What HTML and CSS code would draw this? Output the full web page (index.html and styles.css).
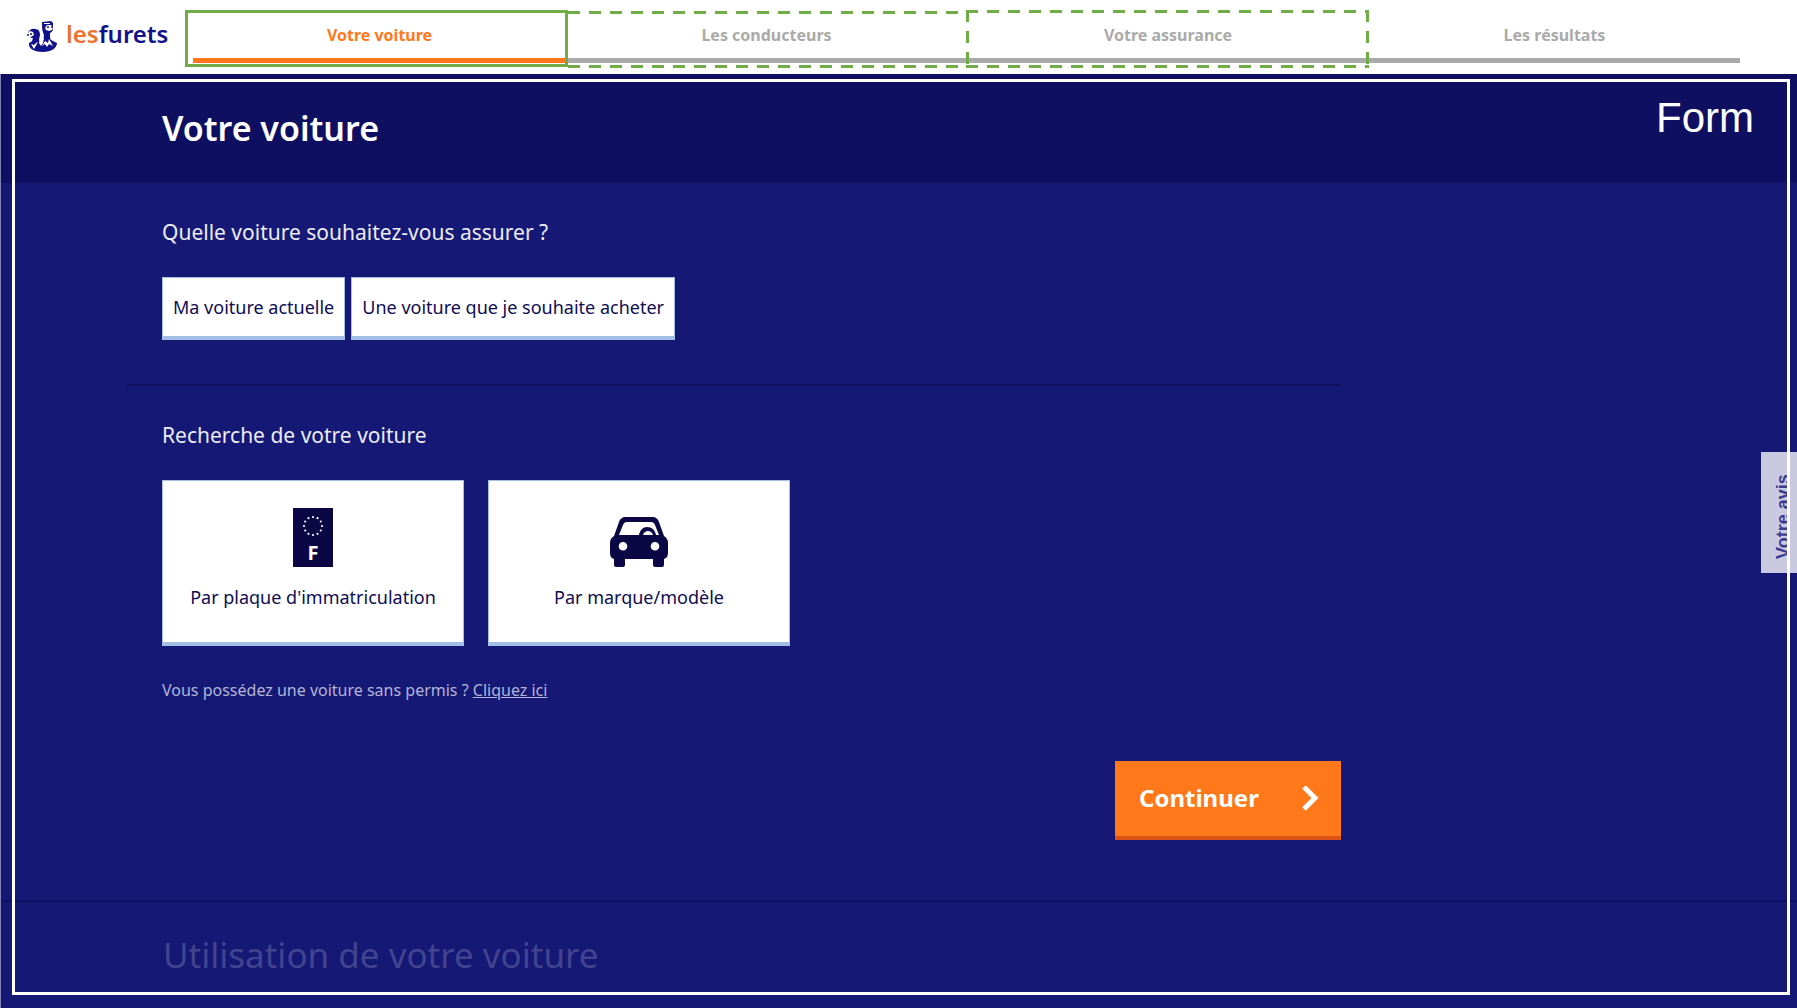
FILE: index.html
```html
<!DOCTYPE html>
<html lang="fr">
<head>
  <meta charset="utf-8">
  <meta name="viewport" content="width=device-width, initial-scale=1">
  <title>lesfurets – Votre voiture</title>
  <link rel="stylesheet" href="styles.css">
</head>
<body>
  <header class="header">
    <a class="logo" href="#">
      <svg class="logo-mark" viewBox="0 0 31 32" aria-hidden="true">
        <g fill="#11128a">
          <path d="M2 22l4-2 10-1 8 0 6 3c0 5-6 9-14 9S1 28 2 22z"/>
          <path d="M1 12c1-3 4-5 7-4 4 0 5 3 5 6l-1 5 2 5-8 0c-2-1-2-3-1-4l1-3c-3 0-5-2-5-5z"/>
          <path d="M15 1l9-1 2 2v5c0 3-1 4-3 5l0 4 2 8-8 0-1-4 1-6c-2-4-2-8-2-13z"/>
        </g>
        <g fill="#fff">
          <path d="M0 13l3-3 3 1 1 3-3 2-2 1z"/>
          <path d="M18 7l2-3 4 0 2 2-1 3-3 1-3-1z"/>
          <path d="M4 23l3 5 4-7-2 1-2 2zM13 16l4 1-1 5-2 3-2-3z"/>
          <path d="M18 20l-3 5 3-2 2 3 2-3 4 2-4-7-1 4z"/>
          <path d="M17 2h6v1h-6z"/>
        </g>
        <g fill="#11128a">
          <circle cx="4" cy="13" r="1"/>
          <circle cx="1" cy="14" r="1"/>
          <circle cx="21" cy="6" r="1"/>
          <circle cx="25" cy="6" r="1"/>
        </g>
      </svg>
      <span class="logo-text"><span class="logo-accent">les</span>furets</span>
    </a>
    <nav class="steps" aria-label="Étapes">
      <a class="step step-current" href="#voiture" aria-current="step">Votre voiture</a>
      <a class="step step-marked" href="#conducteurs">Les conducteurs</a>
      <a class="step step-marked step-closed" href="#assurance">Votre assurance</a>
      <a class="step" href="#resultats">Les résultats</a>
    </nav>
  </header>

  <main class="page">
    <form class="form" action="#">
      <div class="title-band">
        <h1 class="title">Votre voiture</h1>
        <span class="form-tag">Form</span>
      </div>

      <div class="content">
        <section class="block" aria-labelledby="q-car">
          <h2 class="question" id="q-car">Quelle voiture souhaitez-vous assurer ?</h2>
          <div class="options">
            <button class="choice option" type="button">Ma voiture actuelle</button>
            <button class="choice option" type="button">Une voiture que je souhaite acheter</button>
          </div>
        </section>

        <section class="block block-search" aria-labelledby="q-search">
          <h2 class="question" id="q-search">Recherche de votre voiture</h2>
          <div class="cards">
            <button class="choice card" type="button">
              <svg class="card-icon" viewBox="0 0 60 60" aria-hidden="true">
                <rect x="10" y="0" width="40" height="59" fill="#0a0744"/>
                <g fill="#fff">
                  <circle cx="30" cy="9" r="1.1"/><circle cx="34.500" cy="10.200" r="1.1"/>
                  <circle cx="37.800" cy="13.500" r="1.1"/><circle cx="39" cy="18" r="1.1"/>
                  <circle cx="37.800" cy="22.500" r="1.1"/><circle cx="34.500" cy="25.800" r="1.1"/>
                  <circle cx="30" cy="27" r="1.1"/><circle cx="25.500" cy="25.800" r="1.1"/>
                  <circle cx="22.200" cy="22.500" r="1.1"/><circle cx="21" cy="18" r="1.1"/>
                  <circle cx="22.200" cy="13.500" r="1.1"/><circle cx="25.500" cy="10.200" r="1.1"/>
                </g>
                <text class="plate-letter" x="30" y="52" text-anchor="middle">F</text>
              </svg>
              <span>Par plaque d'immatriculation</span>
            </button>
            <button class="choice card" type="button">
              <svg class="card-icon" viewBox="0 0 60 60" aria-hidden="true">
                <path fill="#0a0744" fill-rule="evenodd" d="M17 9h26c4 0 6 2 7 5l5 14c3 2 4 4 4 7v9c0 4-1 6-4 7v6q0 2-2 2h-7q-2 0-2-2v-6H16v6q0 2-2 2H7q-2 0-2-2v-6c-3-1-4-3-4-7v-9c0-3 1-5 4-7l5-14c1-3 3-5 7-5zM18 14q-3 0-4 3L10 27h20c1-5 4-8 8-8 5 0 8 3 9 8h3l-4-10q-1-3-4-3zM34 27h10c-1-3-3-4-5-4s-4 1-5 4zM14 34a4.300 4.300 0 1 0 0 8.600a4.300 4.300 0 1 0 0-8.600zM46 34a4.300 4.300 0 1 0 0 8.600a4.300 4.300 0 1 0 0-8.600z"/>
              </svg>
              <span>Par marque/modèle</span>
            </button>
          </div>
          <p class="note">Vous possédez une voiture sans permis ? <a class="note-link" href="#sans-permis">Cliquez ici</a></p>
        </section>

        <div class="actions">
          <button class="continue" type="submit">
            <span>Continuer</span>
            <svg class="chevron" viewBox="0 0 18 28" aria-hidden="true">
              <path d="M3 3l11 11L3 25" fill="none" stroke="#fff" stroke-width="5"/>
            </svg>
          </button>
        </div>
      </div>

      <section class="next">
        <h2 class="next-title">Utilisation de votre voiture</h2>
      </section>
    </form>
    <button class="feedback" type="button">Votre avis</button>
  </main>
</body>
</html>
```
FILE: styles.css
```css
:root {
  --navy: #151875;
  --navy-dark: #0f0f62;
  --ink: #0f0d52;
  --orange: #ff7819;
  --grey: #aaaaaa;
  --mark: #70ad47;
  --sans: "Noto Sans", "Open Sans", sans-serif;
}

* {
  box-sizing: border-box;
}

body {
  margin: 0;
  min-height: 100vh;
  display: flex;
  flex-direction: column;
  font-family: var(--sans);
  background: var(--navy);
}

h1,
h2,
p {
  margin: 0;
}

button {
  font-family: inherit;
  cursor: pointer;
}

/* Header */
.header {
  display: flex;
  height: 74px;
  padding-right: 57px;
  background: #fff;
}

.logo {
  display: flex;
  gap: 8px;
  flex: none;
  width: 193px;
  padding: 21px 0 0 27px;
  text-decoration: none;
}

.logo-mark {
  width: 31px;
  height: 32px;
}

.logo-text {
  font-size: 24px;
  font-weight: 600;
  line-height: 26px;
  color: #11128a;
}

.logo-accent {
  color: #ec7430;
}

.steps {
  flex: 1;
  display: grid;
  grid-template-columns: 373fr 401fr 402fr 371fr;
}

.step {
  position: relative;
  height: 63px;
  padding-top: 23px;
  border-bottom: 5px solid var(--grey);
  color: var(--grey);
  font-size: 16px;
  font-weight: 700;
  line-height: 24px;
  text-align: center;
  text-decoration: none;
}

.step-current {
  border-color: var(--orange);
  color: var(--orange);
}

/* Green outlines laid over the steps */
.step-current::after {
  content: "";
  position: absolute;
  z-index: 1;
  inset: 10px -2px -9px -8px;
  border: 3px solid var(--mark);
}

.step-marked::after {
  content: "";
  position: absolute;
  inset: 11px 0 -10px 2px;
  background:
    repeating-linear-gradient(90deg, var(--mark) 0 12px, transparent 12px 21px) 0 0 / 100% 3px no-repeat,
    repeating-linear-gradient(90deg, var(--mark) 0 12px, transparent 12px 21px) 0 100% / 100% 3px no-repeat;
}

.step-closed::after {
  inset: 10px 0 -10px -1px;
  background:
    repeating-linear-gradient(90deg, var(--mark) 0 12px, transparent 12px 21px) 0 0 / 100% 3px no-repeat,
    repeating-linear-gradient(90deg, var(--mark) 0 12px, transparent 12px 21px) 0 100% / 100% 3px no-repeat,
    repeating-linear-gradient(180deg, var(--mark) 0 12px, transparent 12px 21px) 0 0 / 3px 100% no-repeat,
    repeating-linear-gradient(180deg, var(--mark) 0 12px, transparent 12px 21px) 100% 0 / 3px 100% no-repeat;
}

/* Form */
.page {
  position: relative;
  flex: 1;
  border-left: 1px solid #8182b4;
  color: #fff;
}

.page::after {
  content: "";
  position: absolute;
  inset: 5px 7px 13px 11px;
  border: 3px solid #fff;
  pointer-events: none;
}

.title-band {
  display: flex;
  justify-content: space-between;
  height: 109px;
  padding: 30px 43px 0 161px;
  background: var(--navy-dark);
}

.title {
  font-size: 34px;
  font-weight: 600;
  line-height: 48px;
}

.form-tag {
  font-family: "Liberation Sans", Arial, sans-serif;
  font-size: 42px;
  line-height: 28px;
}

.content {
  max-width: 1340px;
  padding: 35px 0 60px 126px;
}

.block {
  padding: 0 0 44px 35px;
  border-bottom: 2px solid var(--navy-dark);
}

.block-search {
  padding: 35px 0 0 35px;
  border-bottom: 0;
}

.question {
  margin-bottom: 31px;
  font-size: 21px;
  font-weight: 400;
  line-height: 28px;
  color: #ececf5;
}

.options {
  display: flex;
  gap: 6px;
}

.choice {
  border: 1px solid #a4bfe5;
  border-bottom-width: 4px;
  background: #fff;
  color: var(--ink);
  font-size: 18px;
  line-height: 24px;
}

.option {
  height: 63px;
  padding: 0 10px;
}

.cards {
  display: flex;
  gap: 24px;
}

.card {
  display: flex;
  flex-direction: column;
  align-items: center;
  gap: 17px;
  width: 302px;
  height: 166px;
  padding: 27px 0 0;
}

.card-icon {
  width: 60px;
  height: 60px;
}

.plate-letter {
  font-family: var(--sans);
  font-size: 20px;
  font-weight: 700;
  fill: #fff;
}

.note {
  margin-top: 32px;
  font-size: 16px;
  line-height: 24px;
  color: #b3b4d6;
}

.note-link {
  color: inherit;
}

.actions {
  display: flex;
  justify-content: flex-end;
  margin-top: 59px;
}

.continue {
  display: flex;
  align-items: center;
  justify-content: space-between;
  width: 226px;
  height: 79px;
  padding: 0 22px 2px 24px;
  border: 0;
  border-bottom: 4px solid #dc5216;
  background: var(--orange);
  color: #fff;
  font-size: 24px;
  font-weight: 700;
}

.chevron {
  width: 18px;
  height: 28px;
}

.next {
  padding: 29px 0 28px 162px;
  border-top: 2px solid var(--navy-dark);
}

.next-title {
  font-size: 35px;
  font-weight: 400;
  line-height: 48px;
  color: #42448f;
}

/* Side tab, under the white frame */
.feedback {
  position: absolute;
  top: 378px;
  right: 0;
  width: 36px;
  height: 121px;
  padding: 0 8px 8px 0;
  border: 0;
  background: #c9cae2;
  color: #393b91;
  font-family: "Liberation Sans", Arial, sans-serif;
  font-size: 18px;
  font-weight: 700;
  line-height: 28px;
  writing-mode: vertical-rl;
  rotate: 180deg;
}
```
